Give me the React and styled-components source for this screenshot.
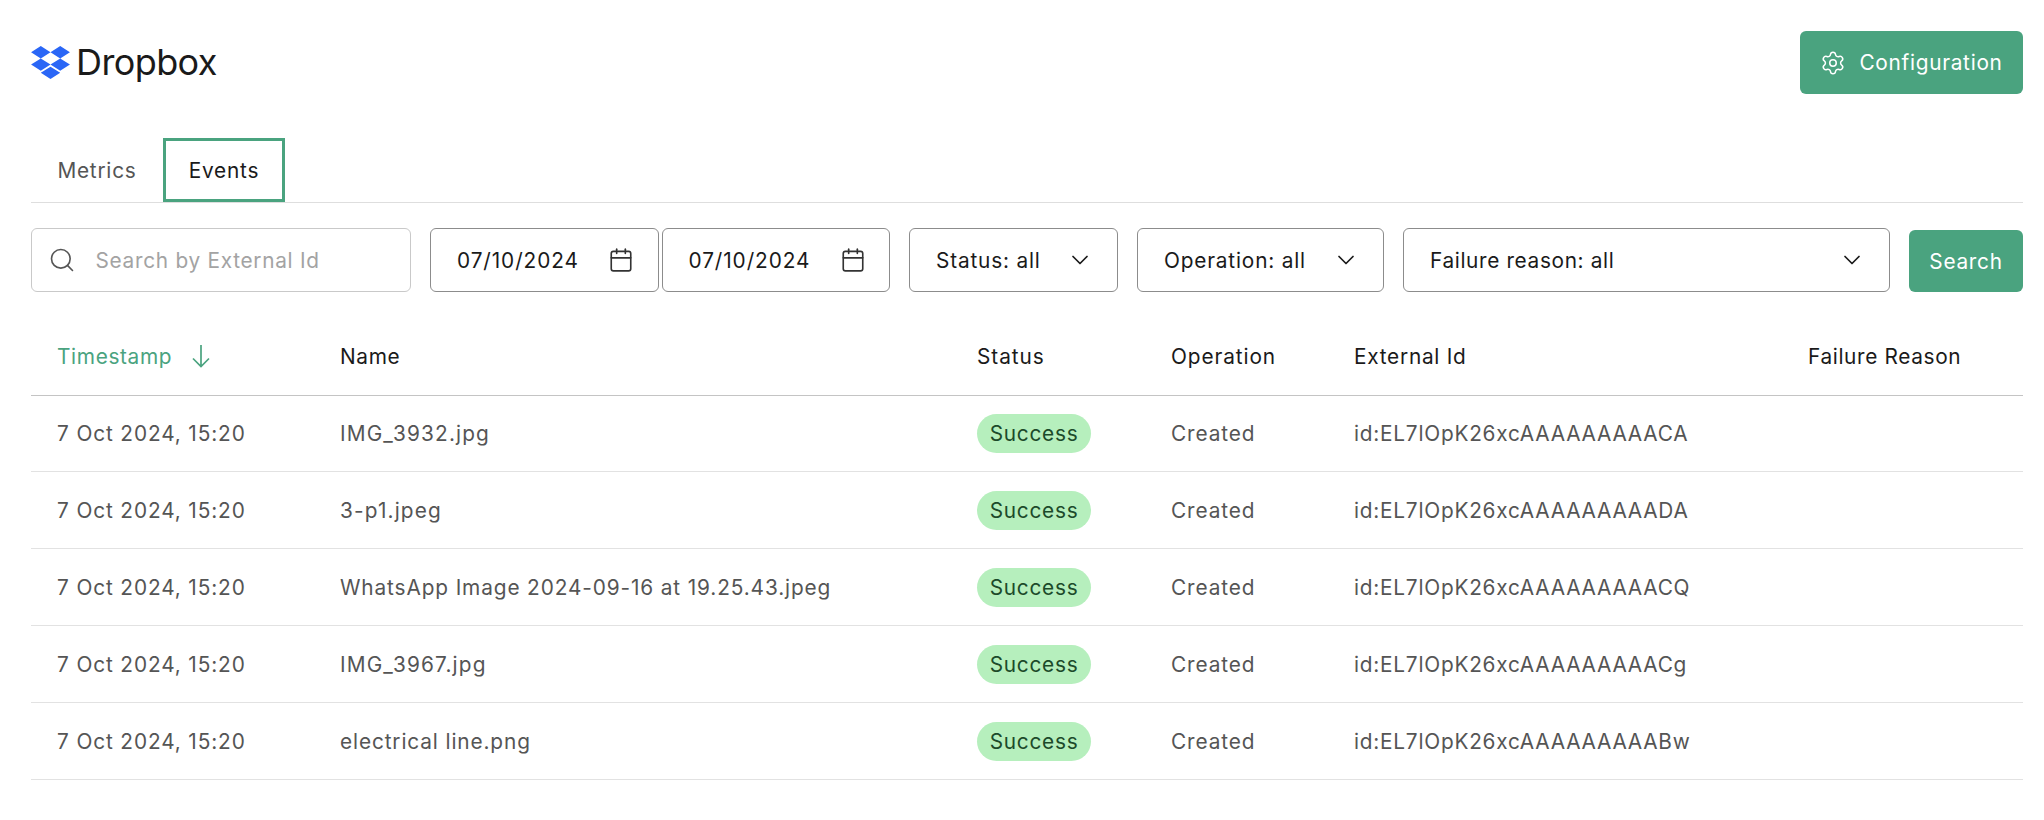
import React from 'react';
import styled, { createGlobalStyle } from 'styled-components';
import { Settings, Search, Calendar, ChevronDown } from 'lucide-react';

const GREEN = '#4aa37f';

const Global = createGlobalStyle`
  html, body { margin: 0; padding: 0; background: #fff; }
  body { font-family: Inter, "Liberation Sans", sans-serif; color: #1e1919; }
  * { box-sizing: border-box; }
`;

const Page = styled.div`
  padding: 31px 21px 0 31px;
`;

const Header = styled.header`
  display: flex;
  align-items: center;
  justify-content: space-between;
  height: 63px;
`;

const Brand = styled.div`
  display: flex;
  align-items: center;
  gap: 6px;
  font-size: 36px;
  letter-spacing: -0.6px;
  line-height: 1;
  color: #1a1a1a;
`;

const BrandName = styled.span`
  padding-bottom: 2px;
`;

const PrimaryButton = styled.button`
  display: flex;
  align-items: center;
  justify-content: center;
  gap: 13px;
  padding: 0;
  border: 0;
  border-radius: 6px;
  background: ${GREEN};
  color: #fff;
  font: 400 20.8px Inter, sans-serif;
  letter-spacing: 0.72px;
  height: ${(p) => p.$height}px;
  width: ${(p) => p.$width}px;
`;

const Tabs = styled.nav`
  display: flex;
  margin-top: 44px;
  height: 65px;
  border-bottom: 1.5px solid #dedede;
`;

const Tab = styled.div`
  display: flex;
  align-items: center;
  justify-content: center;
  height: 64px;
  padding-top: ${(p) => (p.$active ? '0' : '1px')};
  width: ${(p) => p.$width}px;
  font-size: 20.8px;
  letter-spacing: 0.78px;
  color: ${(p) => (p.$active ? '#1a1a1a' : '#555')};
  border: ${(p) => (p.$active ? `3px solid ${GREEN}` : '0')};
`;

const Filters = styled.div`
  display: flex;
  align-items: flex-end;
  gap: 19px;
  margin-top: 25px;
`;

const Field = styled.div`
  display: flex;
  align-items: center;
  justify-content: space-between;
  height: 64px;
  width: ${(p) => (p.$width ? `${p.$width}px` : 'auto')};
  flex: ${(p) => (p.$grow ? '1' : 'none')};
  padding: 0 23.5px 0 26px;
  border: 1.5px solid ${(p) => (p.$light ? '#c9c9c9' : '#8c8c8c')};
  border-radius: 6px;
  font-size: 20.8px;
  letter-spacing: ${(p) => p.$spacing || '0.72px'};
  color: #1a1a1a;
  background: #fff;
`;

const SearchField = styled(Field)`
  justify-content: flex-start;
  gap: 20px;
  padding: 0 15.5px;
  color: #a3a3a3;
`;

const DateGroup = styled.div`
  display: flex;
  gap: 3px;
`;

const Table = styled.table`
  width: 100%;
  margin-top: 26px;
  border-collapse: collapse;
  table-layout: fixed;
  font-size: 20.8px;
`;

const Th = styled.th`
  height: 77px;
  padding: 0 0 0 26px;
  width: ${(p) => (p.$width ? `${p.$width}px` : 'auto')};
  text-align: left;
  font-weight: 400;
  letter-spacing: ${(p) => p.$spacing || '0.65px'};
  color: ${(p) => (p.$sorted ? GREEN : '#1a1a1a')};
  border-bottom: 1.5px solid #c4c4c4;
`;

const SortLabel = styled.span`
  display: inline-flex;
  align-items: center;
  gap: 19px;
`;

const Td = styled.td`
  height: 76.9px;
  padding: 0 0 0 26px;
  color: #555;
  letter-spacing: ${(p) => p.$spacing || '0.88px'};
  border-bottom: 1.5px solid #e2e2e2;
  white-space: nowrap;
`;

const Pill = styled.span`
  display: inline-flex;
  align-items: center;
  justify-content: center;
  height: 39px;
  width: 114px;
  border-radius: 20px;
  background: #b6efbd;
  color: #1c4a2a;
  letter-spacing: 0.75px;
`;

const rows = [
  ['IMG_3932.jpg', 'id:EL7lOpK26xcAAAAAAAAACA'],
  ['3-p1.jpeg', 'id:EL7lOpK26xcAAAAAAAAADA'],
  ['WhatsApp Image 2024-09-16 at 19.25.43.jpeg', 'id:EL7lOpK26xcAAAAAAAAACQ'],
  ['IMG_3967.jpg', 'id:EL7lOpK26xcAAAAAAAAACg'],
  ['electrical line.png', 'id:EL7lOpK26xcAAAAAAAAABw'],
];

const DropboxLogo = () => (
  <svg width="39" height="33" viewBox="0 0 235.45 200" fill="#2a66f6" aria-hidden="true">
    <path d="M58.86 0L0 37.5 58.86 75l58.87-37.5zM176.59 0l-58.86 37.5L176.59 75l58.86-37.5zM0 112.5L58.86 150l58.87-37.5L58.86 75zM176.59 75l-58.86 37.5L176.59 150l58.86-37.5zM58.86 162.5l58.87 37.5 58.86-37.5L117.73 125z" />
  </svg>
);

const SortArrow = () => (
  <svg width="20" height="24" viewBox="0 0 20 24" fill="none" stroke="currentColor" strokeWidth="1.7" aria-hidden="true">
    <path d="M10 1v21.5M2 14.5l8 8 8-8" />
  </svg>
);

export default function App() {
  return (
    <Page>
      <Global />
      <Header>
        <Brand>
          <DropboxLogo />
          <BrandName>Dropbox</BrandName>
        </Brand>
        <PrimaryButton $width={223} $height={63}>
          <Settings size={26} strokeWidth={1.4} />
          Configuration
        </PrimaryButton>
      </Header>
      <Tabs>
        <Tab $width={132}>Metrics</Tab>
        <Tab $width={122} $active>Events</Tab>
      </Tabs>
      <Filters>
        <SearchField $width={380} $light>
          <Search size={28} strokeWidth={1.4} color="#555" />
          Search by External Id
        </SearchField>
        <DateGroup>
          <Field $width={228.5} $spacing="0.92px">
            07/10/2024
            <Calendar size={26} strokeWidth={1.5} color="#333" />
          </Field>
          <Field $width={228.5} $spacing="0.92px">
            07/10/2024
            <Calendar size={26} strokeWidth={1.5} color="#333" />
          </Field>
        </DateGroup>
        <Field $width={209} $spacing="0.82px">
          Status: all
          <ChevronDown size={28} strokeWidth={1.5} />
        </Field>
        <Field $width={247} $spacing="0.82px">
          Operation: all
          <ChevronDown size={28} strokeWidth={1.5} />
        </Field>
        <Field $grow $spacing="0.65px">
          Failure reason: all
          <ChevronDown size={28} strokeWidth={1.5} />
        </Field>
        <PrimaryButton $width={114} $height={62}>Search</PrimaryButton>
      </Filters>
      <Table>
        <thead>
          <tr>
            <Th $width={283} $sorted>
              <SortLabel>
                Timestamp
                <SortArrow />
              </SortLabel>
            </Th>
            <Th $width={637}>Name</Th>
            <Th $width={194} $spacing="0.95px">Status</Th>
            <Th $width={183} $spacing="0.9px">Operation</Th>
            <Th $width={454} $spacing="0.75px">External Id</Th>
            <Th>Failure Reason</Th>
          </tr>
        </thead>
        <tbody>
          {rows.map(([name, id]) => (
            <tr key={id}>
              <Td>7 Oct 2024, 15:20</Td>
              <Td $spacing={name.length < 13 ? '1.15px' : undefined}>{name}</Td>
              <Td><Pill>Success</Pill></Td>
              <Td>Created</Td>
              <Td $spacing="0.77px">{id}</Td>
              <Td />
            </tr>
          ))}
        </tbody>
      </Table>
    </Page>
  );
}
